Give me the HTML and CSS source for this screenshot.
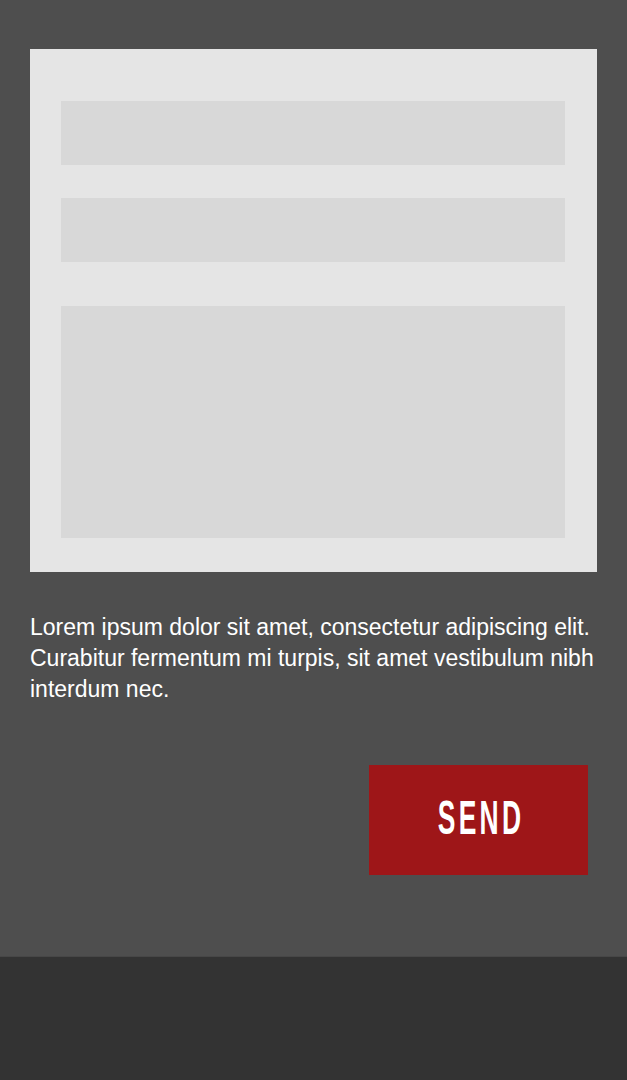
FILE: index.html
```html
<!DOCTYPE html>
<html>
<head>
<meta charset="utf-8">
<link rel="stylesheet" href="styles.css">
</head>
<body>
<main class="main">
  <form class="card">
    <div class="field"></div>
    <div class="field field-second"></div>
    <div class="field field-area"></div>
  </form>
  <p class="copy">Lorem ipsum dolor sit amet, consectetur adipiscing elit. Curabitur fermentum mi turpis, sit amet vestibulum nibh interdum nec.</p>
  <div class="actions">
    <button class="send" type="button"><span class="send-label">SEND</span></button>
  </div>
</main>
<footer class="footer"></footer>
</body>
</html>
```
FILE: styles.css
```css
html, body {
  margin: 0;
  padding: 0;
  background: #333333;
}
body {
  width: 627px;
  height: 1080px;
  display: flex;
  flex-direction: column;
  font-family: "Liberation Sans", Arial, sans-serif;
}
.main {
  background: #4e4e4e;
  height: 957px;
  box-sizing: border-box;
  padding: 49px 30px 0 30px;
  border-bottom: 1px solid #474747;
}
.card {
  margin: 0;
  background: #e5e5e5;
  height: 523px;
  box-sizing: border-box;
  padding: 52px 32px 0 31px;
  display: flex;
  flex-direction: column;
}
.field {
  background: #d8d8d8;
  height: 64px;
}
.field-second {
  margin-top: 33px;
}
.field-area {
  margin-top: 44px;
  height: 232px;
}
.copy {
  margin: 40px -6px 0 0;
  color: #ffffff;
  font-size: 23px;
  line-height: 31px;
}
.actions {
  display: flex;
  justify-content: flex-end;
  margin-top: 60px;
  padding-right: 9px;
}
.send {
  width: 219px;
  height: 110px;
  background: #9e1618;
  border: none;
  padding: 0 0 6px 0;
  display: flex;
  align-items: center;
  justify-content: center;
  color: #ffffff;
}
.send-label {
  display: inline-block;
  font-family: "Liberation Sans", sans-serif;
  font-weight: bold;
  font-size: 49px;
  line-height: 1;
  letter-spacing: 6px;
  margin-right: -6px;
  transform: scaleX(0.54);
}
.footer {
  flex: 1;
  background: #333333;
}
```
